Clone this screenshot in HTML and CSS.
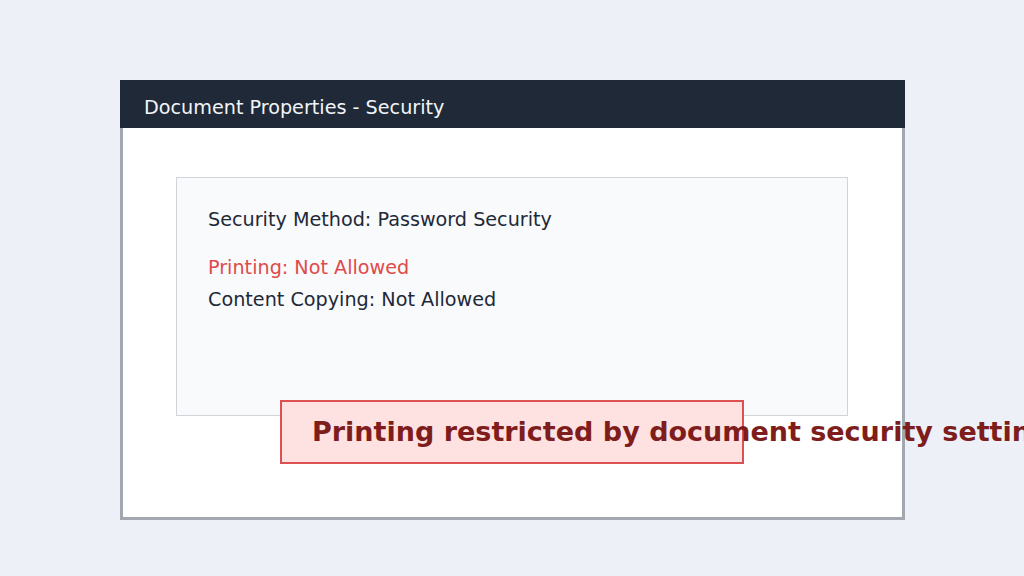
FILE: index.html
```html
<!DOCTYPE html>
<html>
<head>
<meta charset="utf-8">
<link rel="stylesheet" href="styles.css">
</head>
<body>
<div class="page">
  <div class="window">
    <div class="titlebar">Document Properties - Security</div>
    <div class="content">
      <div class="panel">
        <div class="row">Security Method: Password Security</div>
        <div class="row red gap">Printing: Not Allowed</div>
        <div class="row">Content Copying: Not Allowed</div>
      </div>
      <div class="banner">Printing restricted by document security settings</div>
    </div>
  </div>
</div>
</body>
</html>
```
FILE: styles.css
```css
html, body {
  margin: 0;
  padding: 0;
}
body {
  width: 1024px;
  height: 576px;
  overflow: hidden;
  background: #edf1f7;
  font-family: "DejaVu Sans", sans-serif;
}
.page {
  padding: 80px 0 0 120px;
}
.window {
  width: 785px;
}
.titlebar {
  height: 48px;
  background: #1f2937;
  color: #f1f5f9;
  font-size: 19.2px;
  box-sizing: border-box;
  padding: 15px 0 0 24px;
  line-height: 25px;
}
.content {
  position: relative;
  height: 392px;
  box-sizing: border-box;
  background: #ffffff;
  border: 3px solid #a3a8b0;
  border-top: none;
  padding: 49px 0 0 53px;
}
.panel {
  width: 672px;
  height: 239px;
  box-sizing: border-box;
  background: #f8fafc;
  border: 1px solid #d1d5db;
  padding: 26px 0 0 31px;
}
.row {
  font-size: 19.2px;
  line-height: 32px;
  color: #1f2937;
  white-space: nowrap;
}
.row.gap {
  margin-top: 16px;
}
.row.red {
  color: #e04a4a;
}
.banner {
  position: absolute;
  left: 157px;
  top: 272px;
  width: 464px;
  height: 64px;
  box-sizing: border-box;
  background: #fee2e2;
  border: 2px solid #dc5252;
  padding-left: 30px;
  font-size: 27px;
  font-weight: bold;
  color: #7f1d1d;
  line-height: 60px;
  white-space: nowrap;
}
```
